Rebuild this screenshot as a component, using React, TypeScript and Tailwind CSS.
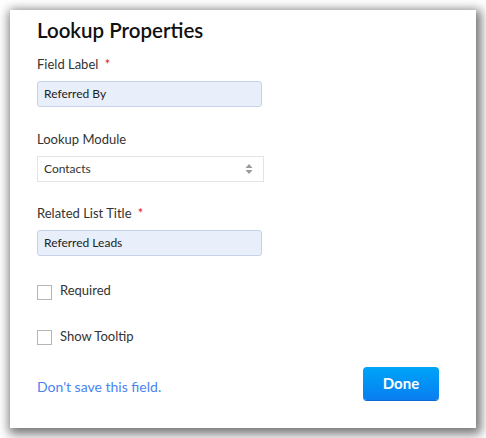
export default function App() {
  return (
    <div className="w-[486px] h-[438px] bg-white p-[10px] font-['Lato','Liberation_Sans',sans-serif]">
      <div className="w-[466px] h-[418px] bg-white shadow-[2px_3px_10px_3px_rgba(0,0,0,0.55)] pl-[27px] pt-[6px] flex flex-col">
        <h1 className="text-[20.5px] font-semibold text-[#111] leading-[28px]">Lookup Properties</h1>

        <label className="mt-[12px] text-[13px] text-[#333] leading-[16px]">
          Field Label <span className="text-[#e02020] ml-[3px]">*</span>
        </label>
        <div className="mt-[9px] w-[225px] h-[26px] bg-[#e8effb] border border-[#c5d2ea] rounded-[3px] flex items-center px-[6px] text-[12px] text-[#222]">
          Referred By
        </div>

        <label className="mt-[24px] text-[13px] text-[#333] leading-[16px]">Lookup Module</label>
        <div className="mt-[9px] w-[227px] h-[26px] bg-white border border-[#e4e4e4] flex items-center justify-between pl-[6px] pr-[10px] text-[12px] text-[#333]">
          <span>Contacts</span>
          <svg width="8" height="12" viewBox="0 0 8 12">
            <path d="M4 1 L7.5 5 H0.5 Z" fill="#9a9a9a" />
            <path d="M4 11 L7.5 7 H0.5 Z" fill="#9a9a9a" />
          </svg>
        </div>

        <label className="mt-[23px] text-[13px] text-[#333] leading-[16px]">
          Related List Title <span className="text-[#e02020] ml-[3px]">*</span>
        </label>
        <div className="mt-[9px] w-[225px] h-[26px] bg-[#e8effb] border border-[#c5d2ea] rounded-[3px] flex items-center px-[6px] text-[12px] text-[#222]">
          Referred Leads
        </div>

        <div className="mt-[29px] flex items-center gap-[8px] text-[13px] text-[#333]">
          <span className="w-[15px] h-[15px] border border-[#b5b5b5] bg-white" />
          <span className="-mt-[4px]">Required</span>
        </div>
        <div className="mt-[28px] flex items-center gap-[8px] text-[13px] text-[#333]">
          <span className="w-[15px] h-[15px] border border-[#b5b5b5] bg-white" />
          <span className="-mt-[2px]">Show Tooltip</span>
        </div>

        <div className="mt-[22px] flex items-center justify-between pr-[37px]">
          <a className="text-[14px] text-[#4a84ef] mt-[4px]">Don't save this field.</a>
          <button className="w-[76px] h-[33px] -mt-[1px] rounded-[4px] bg-gradient-to-b from-[#00a4f8] to-[#0a7ef0] text-white text-[15px] font-bold shadow-[0_1px_0_#0a6bd0]">
            Done
          </button>
        </div>
      </div>
    </div>
  );
}
